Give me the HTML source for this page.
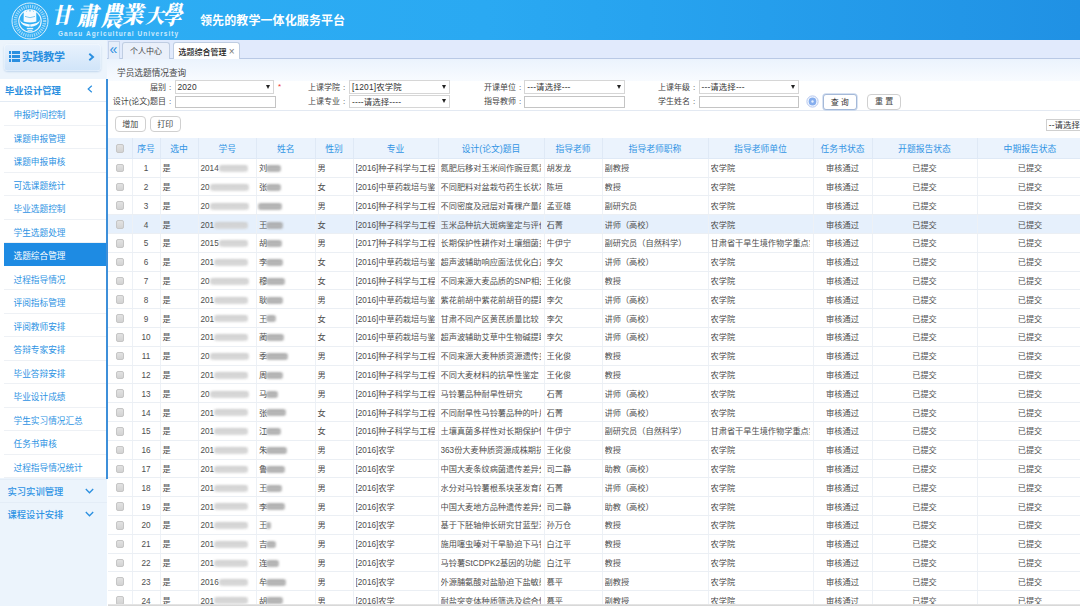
<!DOCTYPE html>
<html lang="zh-CN"><head><meta charset="utf-8"><title>选题综合管理</title>
<style>
*{box-sizing:border-box;margin:0;padding:0}
html,body{width:1080px;height:606px;overflow:hidden;background:#fff}
body{font-family:"Liberation Sans","Noto Sans CJK SC",sans-serif;font-size:8px;color:#444;position:relative}
#hdr{position:absolute;left:0;top:0;width:1080px;height:39.5px;background:linear-gradient(90deg,#2eaef4 0%,#2aa9f2 45%,#27a3ef 60%,#2091e4 100%)}
#hdr .logo{position:absolute;left:10px;top:.8px}
#hdr .uni{position:absolute;left:0;top:0;font-family:"Liberation Serif","Noto Serif CJK SC",serif;font-weight:900;color:#fff;white-space:nowrap}
#hdr .uni span{position:absolute;line-height:1;display:block}
#hdr .en{position:absolute;left:58px;top:30px;font-size:6.5px;font-weight:bold;letter-spacing:1.02px;color:#cdeafc;white-space:nowrap;line-height:8px}
#hdr .slogan{position:absolute;left:200px;top:13px;font-size:12px;font-weight:700;color:#fff;white-space:nowrap;line-height:16px;letter-spacing:0.1px}
#side{position:absolute;left:0;top:39.5px;width:107.5px;height:566.5px;background:#ecf4fc}
.bigbtn{position:absolute;left:3.8px;top:4.5px;width:96.8px;height:26.5px;border-radius:4px;background:linear-gradient(#e8f2fd,#d0e4f9);box-shadow:0 1px 2px rgba(130,170,215,.4),inset 0 0 0 .5px rgba(255,255,255,.6)}
.bigbtn .lines{position:absolute;left:5.3px;top:7px;width:11px}
.bigbtn .lines i{display:block;height:2.8px;margin-bottom:1.1px;background:linear-gradient(90deg,#2a8fe0 0,#2a8fe0 2.4px,#cfe3f9 2.4px,#cfe3f9 3.3px,#2a8fe0 3.3px)}
.bigbtn .bt{position:absolute;left:18px;top:3px;font-size:11px;font-weight:bold;color:#2a8fe0;line-height:20px;letter-spacing:-0.3px;white-space:nowrap}
.bigbtn .chev{position:absolute;left:84.5px;top:8.7px}
.grp{position:absolute;left:0;width:107px;height:23px;font-size:9.3px;font-weight:bold;color:#2a8fe0;line-height:24px;padding-left:5px;white-space:nowrap}
.grp svg{position:absolute}
.g1{top:39.5px;background:#fff;height:22.5px;width:106px}
.g2{padding-left:7.5px;border-top:1px solid #e4edf7;font-weight:500;color:#2e93e4}
.g1 svg{left:87px;top:6px}
.menu{position:absolute;left:0;top:61.5px;width:106px;list-style:none;background:#fff;border-top:1px solid #e3ebf4}
.menu li{height:23.53px;line-height:26.5px;margin-left:3.5px;padding-left:10px;font-size:8.67px;color:#2d93e3;border-bottom:1px solid #eef1f5;white-space:nowrap;overflow:hidden}
.menu li.on{background:#1e8be3;color:#fff;border-bottom-color:#fff}
.g2 svg{left:85px;top:8px}
#vline{position:absolute;left:105.5px;top:79px;width:2px;height:399.5px;background:#3d8fd9;z-index:5}
#main{position:absolute;left:107px;top:40px;width:973px;height:566px;background:#fff}
#tabs{position:absolute;left:0;top:0;width:973px;height:19px;background:#e1eafc;border-bottom:1px solid #b9c9e5}
#tabs .ll{position:absolute;left:.5px;top:1px;width:12px;height:18px;border:1px solid #c6d4ea;border-bottom:none;background:#e6eefa;color:#2a8fe0;font-size:14px;line-height:15px;text-align:center}
.tab{position:absolute;top:2px;height:17px;border:1px solid #bfcde2;border-bottom:none;border-radius:3px 3px 0 0;font-size:8px;line-height:17px;text-align:center;color:#444;background:#eaf0fa;white-space:nowrap}
.tab.on{background:#fff;color:#222;height:18px;font-weight:500}
#qtitle{position:absolute;left:0;top:19px;width:973px;height:22px;background:linear-gradient(#ebf3fd,#f8fbff);font-size:8.67px;line-height:28px;padding-left:10px;color:#444}
#form{position:absolute;left:0;top:41px;width:973px;height:30px;border-bottom:1px solid #e3e9f2}
.lab{position:absolute;text-align:right;white-space:nowrap;line-height:12px;font-size:8px;color:#444}
.sel,.inp{position:absolute;height:12.3px;border:1px solid #c4c4c4;background:#fff;font-size:8.4px;letter-spacing:.15px;line-height:11.5px;padding-left:2px;white-space:nowrap;color:#333}
.sel:after{content:"";position:absolute;right:3px;top:3.5px;border:2.5px solid transparent;border-top:4px solid #222;}
.btn{position:absolute;border:1px solid #d0d0d0;border-radius:4px;background:#fff;font-size:8px;text-align:center;color:#444;white-space:nowrap}
#grid{position:absolute;left:1px;top:97.6px;border-collapse:collapse;table-layout:fixed;width:975px}
#grid th{height:20.8px;background:#ebf3fd;color:#3193e4;font-weight:normal;font-size:8.8px;border-right:1px solid #dfe9f6;border-bottom:1px solid #dfe9f6;text-align:center;white-space:nowrap;overflow:hidden;padding:2px 0 0 0}
#grid td{height:18.81px;border-right:1px solid #edf1f6;border-bottom:1px solid #ebeff4;white-space:nowrap;overflow:hidden;padding:3px 0 0 2px;font-size:8.2px;color:#4e4e4e;line-height:14px}
#grid td.c{text-align:center;padding:3px 0 0 0}
#grid tr.hl td{background:#e6f0fc}
.cb{display:inline-block;width:8.5px;height:8.5px;border:1px solid #c6c6c6;border-radius:2px;background:linear-gradient(#e2e2e2,#d3d3d3);vertical-align:middle;position:relative;top:-1px}
.blur{display:inline-block;height:7px;background:linear-gradient(#d9d9d9 0,#c2c2c2 22%,#e2e2e2 42%,#c6c6c6 62%,#dedede 82%,#cfcfcf 100%);vertical-align:middle;filter:blur(.8px);border-radius:3px;margin-left:0;opacity:.9;position:relative;top:-.5px}
.blur.b2{background:linear-gradient(#b5b5b5 0,#8c8c8c 30%,#c4c4c4 50%,#8f8f8f 72%,#bdbdbd 100%);opacity:.85;margin-left:-1px}

.co{display:inline-block;width:8px;text-align:center}

#botline{position:absolute;left:108px;top:604px;width:972px;height:2px;background:linear-gradient(#e9e9e9,#d2d2d2)}

.sel{border-color:#d6d6d6;height:13.3px;margin-top:-.8px;line-height:12.5px}

#grid td div{overflow:hidden;white-space:nowrap;margin-right:2.5px}

</style></head><body>
<div id="hdr">
<svg class="logo" width="40" height="40" viewBox="0 0 40 40">
<circle cx="20" cy="20" r="18" fill="none" stroke="#dff1fd" stroke-width="1"/>
<circle cx="20" cy="20" r="14.6" fill="none" stroke="#cfeafb" stroke-width="3.4" stroke-dasharray="1.2 1" opacity=".7"/>
<circle cx="20" cy="20" r="11.2" fill="none" stroke="#e4f3fd" stroke-width="1.2"/>
<path d="M13.8 10.8 L15.2 9 L16.6 10.8 L18.2 8.4 L20 10.8 L21.8 8.4 L23.4 10.8 L24.8 9 L26.2 10.8 L26.4 20.6 Q20 22.6 13.6 20.6Z" fill="#f4fafe"/>
<path d="M15 15.4 Q20 18 25 15.4" fill="none" stroke="#5bbcf3" stroke-width=".8"/>
<path d="M9.6 18.6 Q11.4 25.6 20 26 Q28.6 25.6 30.4 18.6 Q28.2 23 20 23.4 Q11.8 23 9.6 18.6Z" fill="#f4fafe"/>
<circle cx="20" cy="25.2" r=".8" fill="#5bbcf3"/>
<path d="M16.8 27.6 L23.2 27.6" stroke="#e4f3fd" stroke-width="1.4"/>
<path d="M17.6 29.6 L22.4 29.6" stroke="#d4ecfb" stroke-width="1"/>
</svg>
<div class="uni"><span style="left:63px;top:17.1px;font-size:21.5px;transform:translate(-50%,-50%) skewX(-12deg) scaleX(0.95)">甘</span><span style="left:89.3px;top:16.400000000000002px;font-size:25px;transform:translate(-50%,-50%) skewX(-12deg) scaleX(0.86)">肅</span><span style="left:112.5px;top:17.1px;font-size:27px;transform:translate(-50%,-50%) skewX(-12deg) scaleX(0.8)">農</span><span style="left:134px;top:16.0px;font-size:23.5px;transform:translate(-50%,-50%) skewX(-12deg) scaleX(0.95)">業</span><span style="left:155.7px;top:16.6px;font-size:19.5px;transform:translate(-50%,-50%) skewX(-12deg) scaleX(0.97)">大</span><span style="left:174px;top:16.0px;font-size:25.5px;transform:translate(-50%,-50%) skewX(-12deg) scaleX(0.76)">學</span></div>
<div class="en">Gansu Agricultural University</div>
<div class="slogan">领先的教学一体化服务平台</div>
</div>

<div id="side">
<div class="bigbtn"><span class="lines"><i></i><i></i><i></i></span><span class="bt">实践教学</span><svg class="chev" width="7" height="8" viewBox="0 0 7 8"><polyline points="1.3,0.8 5,4 1.3,7.2" fill="none" stroke="#2a8fe0" stroke-width="1.9"/></svg></div>
<div class="grp g1"><span>毕业设计管理</span><svg width="6" height="8" viewBox="0 0 6 8"><polyline points="4.8,0.8 1.2,4 4.8,7.2" fill="none" stroke="#2a8fe0" stroke-width="1.2"/></svg></div>
<ul class="menu">
<li>申报时间控制</li>
<li>课题申报管理</li>
<li>课题申报审核</li>
<li>可选课题统计</li>
<li>毕业选题控制</li>
<li>学生选题处理</li>
<li class="on">选题综合管理</li>
<li>过程指导情况</li>
<li>评阅指标管理</li>
<li>评阅教师安排</li>
<li>答辩专家安排</li>
<li>毕业答辩安排</li>
<li>毕业设计成绩</li>
<li>学生实习情况汇总</li>
<li>任务书审核</li>
<li>过程指导情况统计</li>
</ul>
<div class="grp g2" style="top:439.5px"><span>实习实训管理</span><svg width="9" height="6" viewBox="0 0 9 6"><polyline points="0.8,1 4.5,4.8 8.2,1" fill="none" stroke="#2a8fe0" stroke-width="1.3"/></svg></div>
<div class="grp g2" style="top:462.5px"><span>课程设计安排</span><svg width="9" height="6" viewBox="0 0 9 6"><polyline points="0.8,1 4.5,4.8 8.2,1" fill="none" stroke="#2a8fe0" stroke-width="1.3"/></svg></div>
</div>
<div id="vline"></div>
<div id="main">
<div id="tabs">
<div class="ll">«</div>
<div class="tab" style="left:15px;width:48px">个人中心</div>
<div class="tab on" style="left:66px;width:67px">选题综合管理 <span style="color:#777;font-size:10px">×</span></div>
</div>
<div id="qtitle">学员选题情况查询</div>
<div id="form">
<div class="lab" style="left:0;width:67px;top:1px">届别<span class="co">:</span></div>
<div class="sel" style="left:67.5px;top:0;width:99.5px">2020</div>
<div class="lab" style="left:171px;top:0px;color:#e33;text-align:left">*</div>
<div class="lab" style="left:0;width:67px;top:15px">设计(论文)题目<span class="co">:</span></div>
<div class="inp" style="left:67.5px;top:14.5px;width:101px"></div>
<div class="lab" style="left:170px;width:71px;top:1px">上课学院<span class="co">:</span></div>
<div class="sel" style="left:242px;top:0;width:100.5px">[1201]农学院</div>
<div class="lab" style="left:170px;width:71px;top:15px">上课专业<span class="co">:</span></div>
<div class="sel" style="left:242px;top:14.5px;width:100.5px">----请选择----</div>
<div class="lab" style="left:346px;width:71px;top:1px">开课单位<span class="co">:</span></div>
<div class="sel" style="left:417.3px;top:0;width:100.5px">---请选择---</div>
<div class="lab" style="left:346px;width:71px;top:15px">指导教师<span class="co">:</span></div>
<div class="inp" style="left:417.3px;top:14.5px;width:100.5px"></div>
<div class="lab" style="left:520px;width:71px;top:1px">上课年级<span class="co">:</span></div>
<div class="sel" style="left:591.5px;top:0;width:100.5px">---请选择---</div>
<div class="lab" style="left:520px;width:71px;top:15px">学生姓名<span class="co">:</span></div>
<div class="inp" style="left:591.5px;top:14.5px;width:100.5px"></div>
<svg style="position:absolute;left:698.6px;top:13.7px" width="13" height="13" viewBox="0 0 13 13"><circle cx="6.5" cy="6.5" r="5.6" fill="#fafcff" stroke="#b3c5ee" stroke-width="1"/><circle cx="6.5" cy="6.5" r="3.9" fill="#86aeee"/><circle cx="6.5" cy="6.5" r="1.2" fill="#e6f0fd"/></svg>
<div class="btn" style="left:716px;top:13.2px;width:33.5px;height:15.6px;line-height:15px;border-radius:3px;border-color:#a5b9d8;box-shadow:0 0 0 .7px #c9d8ee;color:#333">查 询</div>
<div class="btn" style="left:760.3px;top:13.3px;width:33.5px;height:15.4px;line-height:14.6px">重 置</div>
</div>
<div class="btn" style="left:7.5px;top:76px;width:31.5px;height:15.5px;line-height:16.6px">增加</div>
<div class="btn" style="left:42.7px;top:76px;width:31px;height:15.5px;line-height:16.6px">打印</div>
<div class="sel" style="left:938.7px;top:78.6px;width:60px;height:12.4px;margin-top:0;line-height:11px;border-color:#cfcfcf">--请选择</div>

<table id="grid"><colgroup>
<col style="width:24px">
<col style="width:28px">
<col style="width:38px">
<col style="width:58.5px">
<col style="width:58.5px">
<col style="width:38px">
<col style="width:85px">
<col style="width:106px">
<col style="width:58px">
<col style="width:106px">
<col style="width:105px">
<col style="width:59px">
<col style="width:105px">
<col style="width:106px">
</colgroup><thead><tr>
<th><span class="cb"></span></th>
<th>序号</th>
<th>选中</th>
<th>学号</th>
<th>姓名</th>
<th>性别</th>
<th>专业</th>
<th>设计(论文)题目</th>
<th>指导老师</th>
<th>指导老师职称</th>
<th>指导老师单位</th>
<th>任务书状态</th>
<th>开题报告状态</th>
<th>中期报告状态</th>
</tr></thead><tbody>
<tr><td class="c"><span class="cb"></span></td><td class="c">1</td><td>是</td><td>2014<span class="blur" style="width:29px"></span></td><td>刘<span class="blur b2" style="width:15px"></span></td><td>男</td><td><div>[2016]种子科学与工程</div></td><td><div>氮肥后移对玉米间作豌豆氮素</div></td><td><div>胡发龙</div></td><td><div>副教授</div></td><td><div>农学院</div></td><td class="c">审核通过</td><td class="c">已提交</td><td class="c">已提交</td></tr>
<tr><td class="c"><span class="cb"></span></td><td class="c">2</td><td>是</td><td>20<span class="blur" style="width:39px"></span></td><td>张<span class="blur b2" style="width:15px"></span></td><td>女</td><td><div>[2016]中草药栽培与鉴</div></td><td><div>不同肥料对盆栽芍药生长状况</div></td><td><div>陈垣</div></td><td><div>教授</div></td><td><div>农学院</div></td><td class="c">审核通过</td><td class="c">已提交</td><td class="c">已提交</td></tr>
<tr><td class="c"><span class="cb"></span></td><td class="c">3</td><td>是</td><td>20<span class="blur" style="width:39px"></span></td><td><span class="blur b2" style="width:24px"></span></td><td>男</td><td><div>[2016]种子科学与工程</div></td><td><div>不同密度及冠层对青稞产量的</div></td><td><div>孟亚雄</div></td><td><div>副研究员</div></td><td><div>农学院</div></td><td class="c">审核通过</td><td class="c">已提交</td><td class="c">已提交</td></tr>
<tr class="hl"><td class="c"><span class="cb"></span></td><td class="c">4</td><td>是</td><td>201<span class="blur" style="width:34px"></span></td><td>王<span class="blur b2" style="width:17px"></span></td><td>女</td><td><div>[2016]种子科学与工程</div></td><td><div>玉米品种抗大斑病鉴定与评价</div></td><td><div>石菁</div></td><td><div>讲师（高校）</div></td><td><div>农学院</div></td><td class="c">审核通过</td><td class="c">已提交</td><td class="c">已提交</td></tr>
<tr><td class="c"><span class="cb"></span></td><td class="c">5</td><td>是</td><td>2015<span class="blur" style="width:29px"></span></td><td>胡<span class="blur b2" style="width:16px"></span></td><td>男</td><td><div>[2017]种子科学与工程</div></td><td><div>长期保护性耕作对土壤细菌多</div></td><td><div>牛伊宁</div></td><td><div>副研究员（自然科学）</div></td><td><div>甘肃省干旱生境作物学重点实</div></td><td class="c">审核通过</td><td class="c">已提交</td><td class="c">已提交</td></tr>
<tr><td class="c"><span class="cb"></span></td><td class="c">6</td><td>是</td><td>201<span class="blur" style="width:34px"></span></td><td>李<span class="blur b2" style="width:17px"></span></td><td>女</td><td><div>[2016]中草药栽培与鉴</div></td><td><div>超声波辅助响应面法优化白芷</div></td><td><div>李欠</div></td><td><div>讲师（高校）</div></td><td><div>农学院</div></td><td class="c">审核通过</td><td class="c">已提交</td><td class="c">已提交</td></tr>
<tr><td class="c"><span class="cb"></span></td><td class="c">7</td><td>是</td><td>20<span class="blur" style="width:39px"></span></td><td>穆<span class="blur b2" style="width:19px"></span></td><td>女</td><td><div>[2016]种子科学与工程</div></td><td><div>不同来源大麦品质的SNP相关</div></td><td><div>王化俊</div></td><td><div>教授</div></td><td><div>农学院</div></td><td class="c">审核通过</td><td class="c">已提交</td><td class="c">已提交</td></tr>
<tr><td class="c"><span class="cb"></span></td><td class="c">8</td><td>是</td><td>201<span class="blur" style="width:34px"></span></td><td>耿<span class="blur b2" style="width:17px"></span></td><td>男</td><td><div>[2016]中草药栽培与鉴</div></td><td><div>紫花前胡中紫花前胡苷的提取</div></td><td><div>李欠</div></td><td><div>讲师（高校）</div></td><td><div>农学院</div></td><td class="c">审核通过</td><td class="c">已提交</td><td class="c">已提交</td></tr>
<tr><td class="c"><span class="cb"></span></td><td class="c">9</td><td>是</td><td>201<span class="blur" style="width:34px"></span></td><td>王<span class="blur b2" style="width:10px"></span></td><td>女</td><td><div>[2016]中草药栽培与鉴</div></td><td><div>甘肃不同产区黄芪质量比较</div></td><td><div>李欠</div></td><td><div>讲师（高校）</div></td><td><div>农学院</div></td><td class="c">审核通过</td><td class="c">已提交</td><td class="c">已提交</td></tr>
<tr><td class="c"><span class="cb"></span></td><td class="c">10</td><td>是</td><td>201<span class="blur" style="width:34px"></span></td><td>蔺<span class="blur b2" style="width:18px"></span></td><td>女</td><td><div>[2016]中草药栽培与鉴</div></td><td><div>超声波辅助艾草中生物碱提取</div></td><td><div>李欠</div></td><td><div>讲师（高校）</div></td><td><div>农学院</div></td><td class="c">审核通过</td><td class="c">已提交</td><td class="c">已提交</td></tr>
<tr><td class="c"><span class="cb"></span></td><td class="c">11</td><td>是</td><td>20<span class="blur" style="width:39px"></span></td><td>季<span class="blur b2" style="width:22px"></span></td><td>男</td><td><div>[2016]种子科学与工程</div></td><td><div>不同来源大麦种质资源遗传多</div></td><td><div>王化俊</div></td><td><div>教授</div></td><td><div>农学院</div></td><td class="c">审核通过</td><td class="c">已提交</td><td class="c">已提交</td></tr>
<tr><td class="c"><span class="cb"></span></td><td class="c">12</td><td>是</td><td>201<span class="blur" style="width:34px"></span></td><td>周<span class="blur b2" style="width:17px"></span></td><td>男</td><td><div>[2016]种子科学与工程</div></td><td><div>不同大麦材料的抗旱性鉴定</div></td><td><div>王化俊</div></td><td><div>教授</div></td><td><div>农学院</div></td><td class="c">审核通过</td><td class="c">已提交</td><td class="c">已提交</td></tr>
<tr><td class="c"><span class="cb"></span></td><td class="c">13</td><td>是</td><td>20<span class="blur" style="width:39px"></span></td><td>马<span class="blur b2" style="width:12px"></span></td><td>男</td><td><div>[2016]种子科学与工程</div></td><td><div>马铃薯品种耐旱性研究</div></td><td><div>石菁</div></td><td><div>讲师（高校）</div></td><td><div>农学院</div></td><td class="c">审核通过</td><td class="c">已提交</td><td class="c">已提交</td></tr>
<tr><td class="c"><span class="cb"></span></td><td class="c">14</td><td>是</td><td>201<span class="blur" style="width:34px"></span></td><td>张<span class="blur b2" style="width:20px"></span></td><td>女</td><td><div>[2016]种子科学与工程</div></td><td><div>不同耐旱性马铃薯品种的叶片</div></td><td><div>石菁</div></td><td><div>讲师（高校）</div></td><td><div>农学院</div></td><td class="c">审核通过</td><td class="c">已提交</td><td class="c">已提交</td></tr>
<tr><td class="c"><span class="cb"></span></td><td class="c">15</td><td>是</td><td>201<span class="blur" style="width:34px"></span></td><td>江<span class="blur b2" style="width:15px"></span></td><td>女</td><td><div>[2016]种子科学与工程</div></td><td><div>土壤真菌多样性对长期保护性</div></td><td><div>牛伊宁</div></td><td><div>副研究员（自然科学）</div></td><td><div>甘肃省干旱生境作物学重点实</div></td><td class="c">审核通过</td><td class="c">已提交</td><td class="c">已提交</td></tr>
<tr><td class="c"><span class="cb"></span></td><td class="c">16</td><td>是</td><td>201<span class="blur" style="width:34px"></span></td><td>朱<span class="blur b2" style="width:21px"></span></td><td>男</td><td><div>[2016]农学</div></td><td><div>363份大麦种质资源成株期抗</div></td><td><div>王化俊</div></td><td><div>教授</div></td><td><div>农学院</div></td><td class="c">审核通过</td><td class="c">已提交</td><td class="c">已提交</td></tr>
<tr><td class="c"><span class="cb"></span></td><td class="c">17</td><td>是</td><td>201<span class="blur" style="width:34px"></span></td><td>鲁<span class="blur b2" style="width:19px"></span></td><td>男</td><td><div>[2016]农学</div></td><td><div>中国大麦条纹病菌遗传差异分</div></td><td><div>司二静</div></td><td><div>助教（高校）</div></td><td><div>农学院</div></td><td class="c">审核通过</td><td class="c">已提交</td><td class="c">已提交</td></tr>
<tr><td class="c"><span class="cb"></span></td><td class="c">18</td><td>是</td><td>201<span class="blur" style="width:34px"></span></td><td>王<span class="blur b2" style="width:16px"></span></td><td>男</td><td><div>[2016]农学</div></td><td><div>水分对马铃薯根系块茎发育的</div></td><td><div>石菁</div></td><td><div>讲师（高校）</div></td><td><div>农学院</div></td><td class="c">审核通过</td><td class="c">已提交</td><td class="c">已提交</td></tr>
<tr><td class="c"><span class="cb"></span></td><td class="c">19</td><td>是</td><td>201<span class="blur" style="width:34px"></span></td><td>李<span class="blur b2" style="width:19px"></span></td><td>男</td><td><div>[2016]农学</div></td><td><div>中国大麦地方品种遗传差异分</div></td><td><div>司二静</div></td><td><div>助教（高校）</div></td><td><div>农学院</div></td><td class="c">审核通过</td><td class="c">已提交</td><td class="c">已提交</td></tr>
<tr><td class="c"><span class="cb"></span></td><td class="c">20</td><td>是</td><td>201<span class="blur" style="width:34px"></span></td><td>王<span class="blur b2" style="width:5px"></span></td><td>男</td><td><div>[2016]农学</div></td><td><div>基于下胚轴伸长研究甘蓝型油</div></td><td><div>孙万仓</div></td><td><div>教授</div></td><td><div>农学院</div></td><td class="c">审核通过</td><td class="c">已提交</td><td class="c">已提交</td></tr>
<tr><td class="c"><span class="cb"></span></td><td class="c">21</td><td>是</td><td>201<span class="blur" style="width:34px"></span></td><td>吉<span class="blur b2" style="width:10px"></span></td><td>男</td><td><div>[2016]农学</div></td><td><div>施用噻虫嗪对干旱胁迫下马铃</div></td><td><div>白江平</div></td><td><div>教授</div></td><td><div>农学院</div></td><td class="c">审核通过</td><td class="c">已提交</td><td class="c">已提交</td></tr>
<tr><td class="c"><span class="cb"></span></td><td class="c">22</td><td>是</td><td>201<span class="blur" style="width:34px"></span></td><td>连<span class="blur b2" style="width:13px"></span></td><td>男</td><td><div>[2016]农学</div></td><td><div>马铃薯StCDPK2基因的功能研</div></td><td><div>白江平</div></td><td><div>教授</div></td><td><div>农学院</div></td><td class="c">审核通过</td><td class="c">已提交</td><td class="c">已提交</td></tr>
<tr><td class="c"><span class="cb"></span></td><td class="c">23</td><td>是</td><td>2016<span class="blur" style="width:29px"></span></td><td>牟<span class="blur b2" style="width:20px"></span></td><td>男</td><td><div>[2016]农学</div></td><td><div>外源脯氨酸对盐胁迫下盐敏感</div></td><td><div>慕平</div></td><td><div>副教授</div></td><td><div>农学院</div></td><td class="c">审核通过</td><td class="c">已提交</td><td class="c">已提交</td></tr>
<tr><td class="c"><span class="cb"></span></td><td class="c">24</td><td>是</td><td>201<span class="blur" style="width:34px"></span></td><td>胡<span class="blur b2" style="width:17px"></span></td><td>男</td><td><div>[2016]农学</div></td><td><div>耐盐突变体种质筛选及综合性</div></td><td><div>慕平</div></td><td><div>副教授</div></td><td><div>农学院</div></td><td class="c">审核通过</td><td class="c">已提交</td><td class="c">已提交</td></tr>
</tbody></table>
</div><div id="botline"></div></body></html>
